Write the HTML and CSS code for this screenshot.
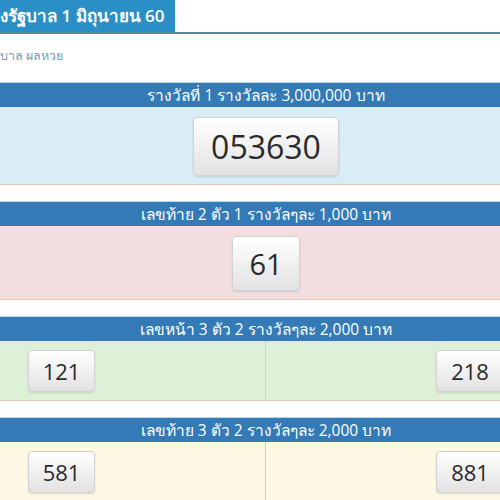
FILE: index.html
```html
<!DOCTYPE html>
<html lang="th">
<head>
<meta charset="utf-8">
<title>ผลสลากกินแบ่งรัฐบาล 1 มิถุนายน 60</title>
<link rel="stylesheet" href="styles.css">
</head>
<body>
<div class="titlebar"><h1 class="tab">งรัฐบาล 1 มิถุนายน 60</h1></div>
<div class="crumb">บาล ผลหวย</div>
<div class="page">
  <section class="prize prize-info">
    <h2 class="prize-head">รางวัลที่ 1 รางวัลละ 3,000,000 บาท</h2>
    <div class="prize-body single pad-lg"><span class="num num-xl">053630</span></div>
  </section>
  <section class="prize prize-danger">
    <h2 class="prize-head">เลขท้าย 2 ตัว 1 รางวัลๆละ 1,000 บาท</h2>
    <div class="prize-body single pad-lg"><span class="num num-lg">61</span></div>
  </section>
  <section class="prize prize-success">
    <h2 class="prize-head">เลขหน้า 3 ตัว 2 รางวัลๆละ 2,000 บาท</h2>
    <div class="prize-body split">
      <div class="cell"><span class="num num-md">121</span></div>
      <div class="cell"><span class="num num-md">218</span></div>
    </div>
  </section>
  <section class="prize prize-warning">
    <h2 class="prize-head">เลขท้าย 3 ตัว 2 รางวัลๆละ 2,000 บาท</h2>
    <div class="prize-body split">
      <div class="cell"><span class="num num-md">581</span></div>
      <div class="cell"><span class="num num-md">881</span></div>
    </div>
  </section>
</div>
</body>
</html>
```
FILE: styles.css
```css
html, body {
  margin: 0;
  padding: 0;
  background: #ffffff;
  overflow: hidden;
}
body {
  font-family: "Open Sans", "Noto Sans", Tahoma, sans-serif;
  color: #333333;
  width: 500px;
  height: 500px;
}
.titlebar {
  display: flex;
  border-bottom: 2px solid #4f8d9c;
}
.tab {
  margin: 0;
  height: 32px;
  line-height: 32px;
  padding: 0 11px 0 0;
  background: #2a8fc6;
  color: #ffffff;
  font-size: 17px;
  font-weight: 600;
  white-space: nowrap;
}
.crumb {
  margin: 12px 0 16px;
  height: 20px;
  line-height: 20px;
  font-size: 12.5px;
  color: #7b9cb4;
  white-space: nowrap;
}
.page {
  width: 816px;
  margin-left: -142px;
}
.prize {
  margin-bottom: 16px;
}
.prize-head {
  margin: 0;
  height: 24px;
  line-height: 24px;
  border-top: 1px solid #b7d9ec;
  background: #337ab7;
  color: #ffffff;
  text-align: center;
  font-size: 15.5px;
  font-weight: 400;
  white-space: nowrap;
}
.prize-body {
  border-bottom: 1px solid #e4c6b4;
}
.single {
  display: flex;
  justify-content: center;
  padding: 10px 0 8px;
}
.split {
  display: grid;
  grid-template-columns: 1fr 1fr;
}
.cell {
  display: flex;
  justify-content: center;
  padding: 9px 0 8px;
}
.cell:first-child {
  border-right: 1px solid #e4c6b4;
}
.prize-info .prize-body { background: #d9edf7; }
.prize-danger .prize-body { background: #f2dede; }
.prize-success .prize-body { background: #dff0d8; }
.prize-warning .prize-body { background: #fcf8e3; }
.num {
  display: inline-block;
  font-family: "Open Sans", sans-serif;
  color: #2b2b2b;
  background: linear-gradient(to bottom, #ffffff 0%, #e2e2e2 100%);
  border: 1px solid #d2d2d2;
  border-radius: 4px;
  box-shadow: 0 1px 2px rgba(0, 0, 0, 0.12);
  text-align: center;
}
.num-xl {
  font-size: 32px;
  line-height: 45px;
  padding: 6px 17px;
}
.num-lg {
  font-size: 29px;
  line-height: 41px;
  padding: 6px 16px;
}
.num-md {
  font-size: 22px;
  line-height: 28px;
  padding: 6px 14px;
}
```
